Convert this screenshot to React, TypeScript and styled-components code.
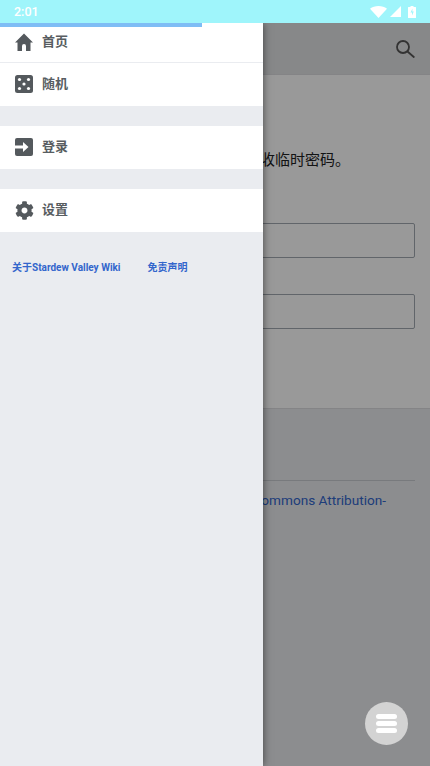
import React, { FC } from 'react'
import styled, { createGlobalStyle } from 'styled-components'
import { FaCog } from 'react-icons/fa'

const GlobalStyle = createGlobalStyle`
  html, body {
    margin: 0;
    padding: 0;
    background: #fff;
  }
  * {
    box-sizing: border-box;
  }
`

const Root = styled.div`
  display: flex;
  flex-flow: column;
  width: 430px;
  height: 766px;
  overflow: hidden;
  font-family: Roboto, 'Noto Sans CJK SC', sans-serif;
`

const StatusBar = styled.div`
  display: flex;
  flex: none;
  align-items: center;
  height: 23px;
  padding: 0 14px;
  background-color: #9ff5fb;
  color: #fff;
`

const Clock = styled.span`
  flex: 1;
  font-size: 12.5px;
  font-weight: 500;
`

const StatusIcons = styled.div`
  display: flex;
  align-items: center;
`

const Screen = styled.div`
  position: relative;
  display: flex;
  flex-flow: column;
  flex: 1;
  overflow: hidden;
`

const PageHeader = styled.header`
  display: flex;
  flex: none;
  justify-content: flex-end;
  align-items: center;
  height: 52px;
  padding-right: 15px;
  background-color: #e2e3e4;
  border-bottom: 1px solid #dcdde0;
`

const PageBody = styled.main`
  flex: none;
  height: 333px;
  padding: 75px 15px 0;
  background-color: #fff;
  color: #202122;
`

const Intro = styled.p`
  margin: 0 0 53px;
  padding-right: 65px;
  font-size: 15px;
  line-height: 20px;
  white-space: nowrap;
  text-align: right;
`

const FieldBox = styled.div`
  height: 35px;
  margin-bottom: 36px;
  border: 1px solid #a2a9b1;
  border-radius: 2px;
`

const PageFooter = styled.footer`
  flex: 1;
  padding: 71px 15px 0;
  background-color: #eaebee;
  border-top: 1px solid #dcdde0;
`

const FooterRule = styled.div`
  height: 1px;
  background-color: #c8ccd1;
`

const License = styled.p`
  margin: 9px 29px 0 0;
  color: #3366cc;
  font-size: 13.6px;
  line-height: 20px;
  text-align: right;
`

const Dim = styled.div`
  position: absolute;
  inset: 0;
  background-color: rgba(0, 0, 0, 0.4);
`

const ProgressBar = styled.div`
  position: absolute;
  top: 0;
  left: 0;
  z-index: 3;
  width: 202px;
  height: 4px;
  background-color: #7fbdf5;
`

const Drawer = styled.nav`
  position: absolute;
  top: 0;
  bottom: 0;
  left: 0;
  z-index: 2;
  width: 263px;
  overflow: hidden;
  background-color: #eaecf0;
  box-shadow: 0 0 8px rgba(0, 0, 0, 0.55);
`

const MenuGroup = styled.div<{ $scrolled?: boolean }>`
  margin-top: ${(p) => (p.$scrolled ? '-3px' : '0')};
  margin-bottom: 20.5px;
  background-color: #fff;
`

const MenuItem = styled.div<{ $first?: boolean }>`
  display: flex;
  align-items: center;
  gap: 8px;
  height: ${(p) => (p.$first ? '43px' : '42.5px')};
  padding-top: ${(p) => (p.$first ? '2px' : '0')};
  padding-left: 14px;
  border-bottom: ${(p) => (p.$first ? '1px solid #eaecf0' : 'none')};
  color: #585d61;
  font-size: 13px;
  font-weight: 600;
`

const MenuIcon = styled.span`
  display: flex;
  justify-content: center;
  align-items: center;
  width: 20px;
  height: 20px;
  color: #54595d;
`

const MenuLabel = styled.span`
  padding-bottom: 3px;
`

const DrawerLinks = styled.div`
  display: flex;
  gap: 27px;
  padding: 9px 12px;
  color: #3366cc;
  font-size: 10px;
  font-weight: 700;
  line-height: 14px;
`

const Fab = styled.button`
  position: absolute;
  right: 22px;
  bottom: 21px;
  z-index: 1;
  display: flex;
  flex-flow: column;
  justify-content: center;
  align-items: center;
  gap: 2px;
  width: 43px;
  height: 43px;
  padding: 0;
  border: none;
  border-radius: 50%;
  background-color: #d3d3d3;
`

const FabBar = styled.span`
  width: 21px;
  height: 5px;
  border-radius: 3px;
  background-color: #fff;
`

const HomeIcon: FC = () => (
  <svg width="18" height="18" viewBox="0 0 18 18" fill="currentColor">
    <path d="M9 .5 0 9.5h2.500V18H7v-5a2 2 0 0 1 4 0v5h4.500V9.500H18z" />
  </svg>
)

const DiceIcon: FC = () => (
  <svg width="18" height="18" viewBox="0 0 18 18">
    <rect width="18" height="18" rx="2.500" fill="currentColor" />
    <g fill="#fff">
      <circle cx="4.500" cy="4.500" r="1.600" />
      <circle cx="13.500" cy="4.500" r="1.600" />
      <circle cx="9" cy="9" r="1.600" />
      <circle cx="4.500" cy="13.500" r="1.600" />
      <circle cx="13.500" cy="13.500" r="1.600" />
    </g>
  </svg>
)

const LoginIcon: FC = () => (
  <svg width="18" height="18" viewBox="0 0 18 18">
    <rect width="18" height="18" rx="2" fill="currentColor" />
    <path d="M0 7.500h8V4l5.500 5L8 14v-3.500H0z" fill="#fff" />
  </svg>
)

const SearchIcon: FC = () => (
  <svg width="20" height="20" viewBox="0 0 20 20" fill="none" stroke="#555" strokeWidth="1.800">
    <circle cx="8" cy="8" r="6" />
    <path d="m12.500 12.500 6.300 5.500" strokeLinecap="round" />
  </svg>
)

const WifiIcon: FC = () => (
  <svg width="17" height="12" viewBox="0 0 17 12" fill="#fff">
    <path d="M8.500 12 0 2.800C2.300 1 5.200 0 8.500 0S14.700 1 17 2.800z" />
  </svg>
)

const SignalIcon: FC = () => (
  <svg width="11" height="11" viewBox="0 0 11 11" fill="#fff" style={{ marginLeft: 3 }}>
    <path d="M11 0v11H0z" />
  </svg>
)

const BatteryIcon: FC = () => (
  <svg width="8" height="12" viewBox="0 0 8 12" style={{ marginLeft: 7 }}>
    <path d="M2.500 0h3v1H7.500a.5.5 0 0 1 .5.500V11.500a.5.5 0 0 1-.5.5H.5a.5.5 0 0 1-.5-.5V1.500A.5.5 0 0 1 .5 1h2z" fill="#fff" />
    <path d="M4.500 2.500 2.500 6.500H4V9.500L5.800 5.500H4.300z" fill="#9ff5fb" />
  </svg>
)

export default function App() {
  return (
    <Root>
      <GlobalStyle />
      <StatusBar>
        <Clock>2:01</Clock>
        <StatusIcons>
          <WifiIcon />
          <SignalIcon />
          <BatteryIcon />
        </StatusIcons>
      </StatusBar>
      <Screen>
        <PageHeader>
          <SearchIcon />
        </PageHeader>
        <PageBody>
          <Intro>输入您的用户信息以接收临时密码。</Intro>
          <FieldBox />
          <FieldBox />
        </PageBody>
        <PageFooter>
          <FooterRule />
          <License>Creative Commons Attribution-</License>
        </PageFooter>
        <Dim />
        <ProgressBar />
        <Drawer>
          <MenuGroup $scrolled>
            <MenuItem $first>
              <MenuIcon>
                <HomeIcon />
              </MenuIcon>
              <MenuLabel>首页</MenuLabel>
            </MenuItem>
            <MenuItem>
              <MenuIcon>
                <DiceIcon />
              </MenuIcon>
              <MenuLabel>随机</MenuLabel>
            </MenuItem>
          </MenuGroup>
          <MenuGroup>
            <MenuItem>
              <MenuIcon>
                <LoginIcon />
              </MenuIcon>
              <MenuLabel>登录</MenuLabel>
            </MenuItem>
          </MenuGroup>
          <MenuGroup>
            <MenuItem>
              <MenuIcon>
                <FaCog size={19} />
              </MenuIcon>
              <MenuLabel>设置</MenuLabel>
            </MenuItem>
          </MenuGroup>
          <DrawerLinks>
            <span>关于Stardew Valley Wiki</span>
            <span>免责声明</span>
          </DrawerLinks>
        </Drawer>
        <Fab aria-label="menu">
          <FabBar />
          <FabBar />
          <FabBar />
        </Fab>
      </Screen>
    </Root>
  )
}
